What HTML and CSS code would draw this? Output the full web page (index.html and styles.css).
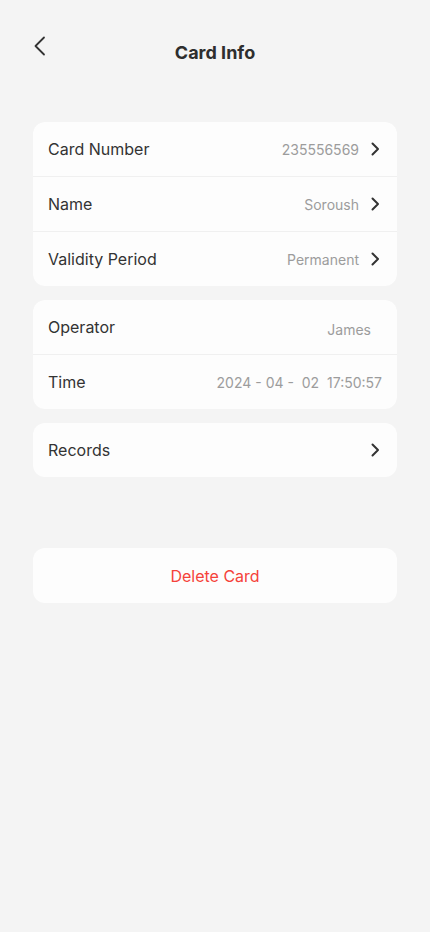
FILE: index.html
```html
<!DOCTYPE html>
<html lang="en">
<head>
    <title>Card Info</title>

    <link rel="stylesheet" href="styles.css">
</head>
<body>
    <header class="top-bar">
        <button class="back">
            <svg width="14" height="20" viewBox="0 0 14 20">
                <path d="M11 1.5 L2.5 10 L11 18.5" fill="none" stroke="#333" stroke-width="1.8" stroke-linecap="round" stroke-linejoin="round"/>
            </svg>
        </button>
        <h1 class="title">Card Info</h1>
        <span class="spacer"></span>
    </header>

    <main class="content">
        <section class="card">
            <div class="row">
                <span class="label">Card Number</span>
                <span class="value">235556569</span>
                <svg class="chevron" width="10" height="14" viewBox="0 0 10 14">
                    <path d="M2.5 1.5 L8 7 L2.5 12.5" fill="none" stroke="#333" stroke-width="2" stroke-linecap="round" stroke-linejoin="round"/>
                </svg>
            </div>
            <div class="row">
                <span class="label">Name</span>
                <span class="value">Soroush</span>
                <svg class="chevron" width="10" height="14" viewBox="0 0 10 14">
                    <path d="M2.5 1.5 L8 7 L2.5 12.5" fill="none" stroke="#333" stroke-width="2" stroke-linecap="round" stroke-linejoin="round"/>
                </svg>
            </div>
            <div class="row">
                <span class="label">Validity Period</span>
                <span class="value">Permanent</span>
                <svg class="chevron" width="10" height="14" viewBox="0 0 10 14">
                    <path d="M2.5 1.5 L8 7 L2.5 12.5" fill="none" stroke="#333" stroke-width="2" stroke-linecap="round" stroke-linejoin="round"/>
                </svg>
            </div>
        </section>

        <section class="card">
            <div class="row">
                <span class="label">Operator</span>
                <span class="value value-operator">James</span>
            </div>
            <div class="row">
                <span class="label">Time</span>
                <span class="value value-time">2024 - 04 -&nbsp; 02&nbsp; 17:50:57</span>
            </div>
        </section>

        <section class="card">
            <div class="row">
                <span class="label">Records</span>
                <svg class="chevron" width="10" height="14" viewBox="0 0 10 14">
                    <path d="M2.5 1.5 L8 7 L2.5 12.5" fill="none" stroke="#333" stroke-width="2" stroke-linecap="round" stroke-linejoin="round"/>
                </svg>
            </div>
        </section>

        <button class="card delete">Delete Card</button>
    </main>
</body>
</html>
```

FILE: styles.css
```css
body {
    margin: 0;
    width: 430px;
    min-height: 932px;
    background-color: #f4f4f4;
    color: #333;
    font-family: Inter, "Noto Sans", sans-serif;
}

.top-bar {
    display: flex;
    align-items: center;
    height: 44px;
    padding: 30px 33px 0;
}

.back {
    display: flex;
    align-self: flex-start;
    width: 50px;
    margin-top: 6px;
    padding: 0;
    border: none;
    background: none;
}

.title {
    flex: 1;
    margin: 0;
    text-align: center;
    font-size: 18px;
    font-weight: 700;
    color: #2e2e2e;
}

.spacer {
    width: 50px;
}

.content {
    display: flex;
    flex-direction: column;
    gap: 14px;
    padding: 48px 33px 0;
}

.card {
    display: flex;
    flex-direction: column;
    gap: 1px;
    background-color: #f0f0f0;
    border-radius: 12px;
    overflow: hidden;
}

.row {
    display: flex;
    align-items: center;
    height: 54px;
    padding: 0 17px 0 15px;
    background-color: #fdfdfd;
}

.label {
    flex: 1;
    font-size: 16px;
    color: #333;
}

.value {
    font-size: 14px;
    color: #9c9c9c;
}

.chevron {
    margin-left: 11px;
}

.value-operator {
    margin-top: 5px;
    margin-right: 9px;
}

.value-time {
    margin-right: -2px;
}

.delete {
    align-items: center;
    justify-content: center;
    height: 55px;
    margin-top: 57px;
    border: none;
    background-color: #fdfdfd;
    font-family: inherit;
    font-size: 16px;
    color: #f5423a;
}
```
